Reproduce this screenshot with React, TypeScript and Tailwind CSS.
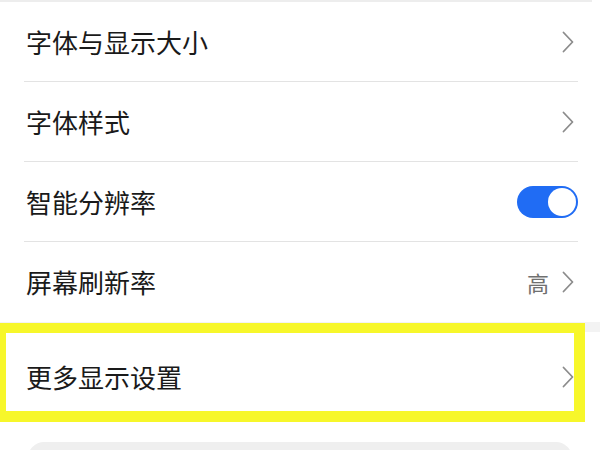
import React from "react";

const Chevron = () => (
  <svg width="12" height="22" viewBox="0 0 12 22" fill="none">
    <polyline
      points="1.5,1.5 10.5,11 1.5,20.5"
      stroke="#8c8c8c"
      strokeWidth="1.8"
      strokeLinecap="round"
      strokeLinejoin="round"
    />
  </svg>
);

const Toggle = () => (
  <div className="flex h-[32px] w-[61px] items-center justify-end rounded-full bg-[#206cf4] p-[2px]">
    <div className="h-[28px] w-[28px] rounded-full bg-white" />
  </div>
);

type Row = { label: string; value?: string; toggle?: boolean };

const rows: Row[] = [
  { label: "字体与显示大小" },
  { label: "字体样式" },
  { label: "智能分辨率", toggle: true },
  { label: "屏幕刷新率", value: "高" },
];

export default function App() {
  return (
    <div
      className="relative h-[450px] w-[600px] overflow-hidden bg-white text-[#1a1a1a]"
      style={{ fontFamily: '"Noto Sans CJK SC", "Noto Sans", sans-serif' }}
    >
      <div className="h-[2px] w-[592px] bg-[#ededed]" />

      <div className="ml-[24px] mr-[22px]">
        {rows.map((row, i) => (
          <div
            key={row.label}
            className={`flex h-[80px] items-center justify-between pl-[2px] ${
              i < rows.length - 1 ? "border-b border-[#e3e3e3]" : ""
            } ${row.toggle ? "pr-0" : "pr-[4px]"}`}
          >
            <span className="text-[26px] leading-none">{row.label}</span>
            {row.toggle ? (
              <Toggle />
            ) : (
              <div className="flex items-center gap-[13px]">
                {row.value && (
                  <span className="text-[22px] leading-none text-[#707070]">
                    {row.value}
                  </span>
                )}
                <Chevron />
              </div>
            )}
          </div>
        ))}
      </div>

      <div className="h-[10px] bg-[#f3f3f3]" />

      <div className="ml-[24px] mr-[26px] flex h-[90px] items-center justify-between pl-[2px]">
        <span className="text-[26px] leading-none">更多显示设置</span>
        <Chevron />
      </div>

      <div className="mx-[28px] mt-[20px] h-[60px] rounded-[16px] bg-[#efefef]" />

      {/* highlight annotation */}
      <div className="absolute left-0 top-[323px] h-[99px] w-[585px] border-[10px] border-l-[6px] border-b-[11px] border-r-[11px] border-[#f7f72a]" />
    </div>
  );
}
